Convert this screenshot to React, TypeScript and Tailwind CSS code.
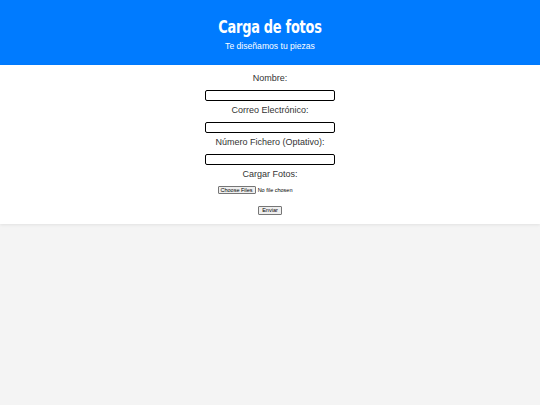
export default function App() {
  return (
    <div className="min-h-[405px] bg-[#f4f4f4] font-['Liberation_Sans',Arial,sans-serif]">
      <header className="h-[65px] bg-[#007bff] text-white flex flex-col items-center pt-[15px]">
        <h1 className="font-['DejaVu_Sans',sans-serif] font-stretch-condensed font-bold text-[17.5px] leading-[24px] tracking-[-0.3px] scale-x-[0.82]">
          Carga de fotos
        </h1>
        <p className="text-[8.6px] leading-[12px] mt-[1px]">Te diseñamos tu piezas</p>
      </header>
      <form className="bg-white shadow-[0_1px_3px_rgba(0,0,0,0.08)] flex flex-col items-center pt-[8px] pb-[9px] text-[#333]">
        <label className="text-[9px] leading-[11px]">Nombre:</label>
        <input className="mt-[6px] w-[130px] h-[11px] border border-black rounded-[2px]" />
        <label className="mt-[4px] text-[9px] leading-[11px]">Correo Electrónico:</label>
        <input className="mt-[6px] w-[130px] h-[11px] border border-black rounded-[2px]" />
        <label className="mt-[4px] text-[9px] leading-[11px]">Número Fichero (Optativo):</label>
        <input className="mt-[6px] w-[130px] h-[11px] border border-black rounded-[2px]" />
        <label className="mt-[4px] text-[9px] leading-[11px]">Cargar Fotos:</label>
        <div className="mt-[6px] h-[8px] flex items-center text-[5.5px] leading-[7px] -translate-x-[15px]">
          <span className="px-[2px] h-[8px] flex items-center bg-[#efefef] border border-[#767676] rounded-[1px] text-black">
            Choose Files
          </span>
          <span className="ml-[2px] text-black">No file chosen</span>
        </div>
        <button
          type="button"
          className="mt-[12px] px-[3px] h-[9px] flex items-center text-[5.5px] bg-[#efefef] border border-[#767676] rounded-[1px] text-black"
        >
          Enviar
        </button>
      </form>
    </div>
  );
}
